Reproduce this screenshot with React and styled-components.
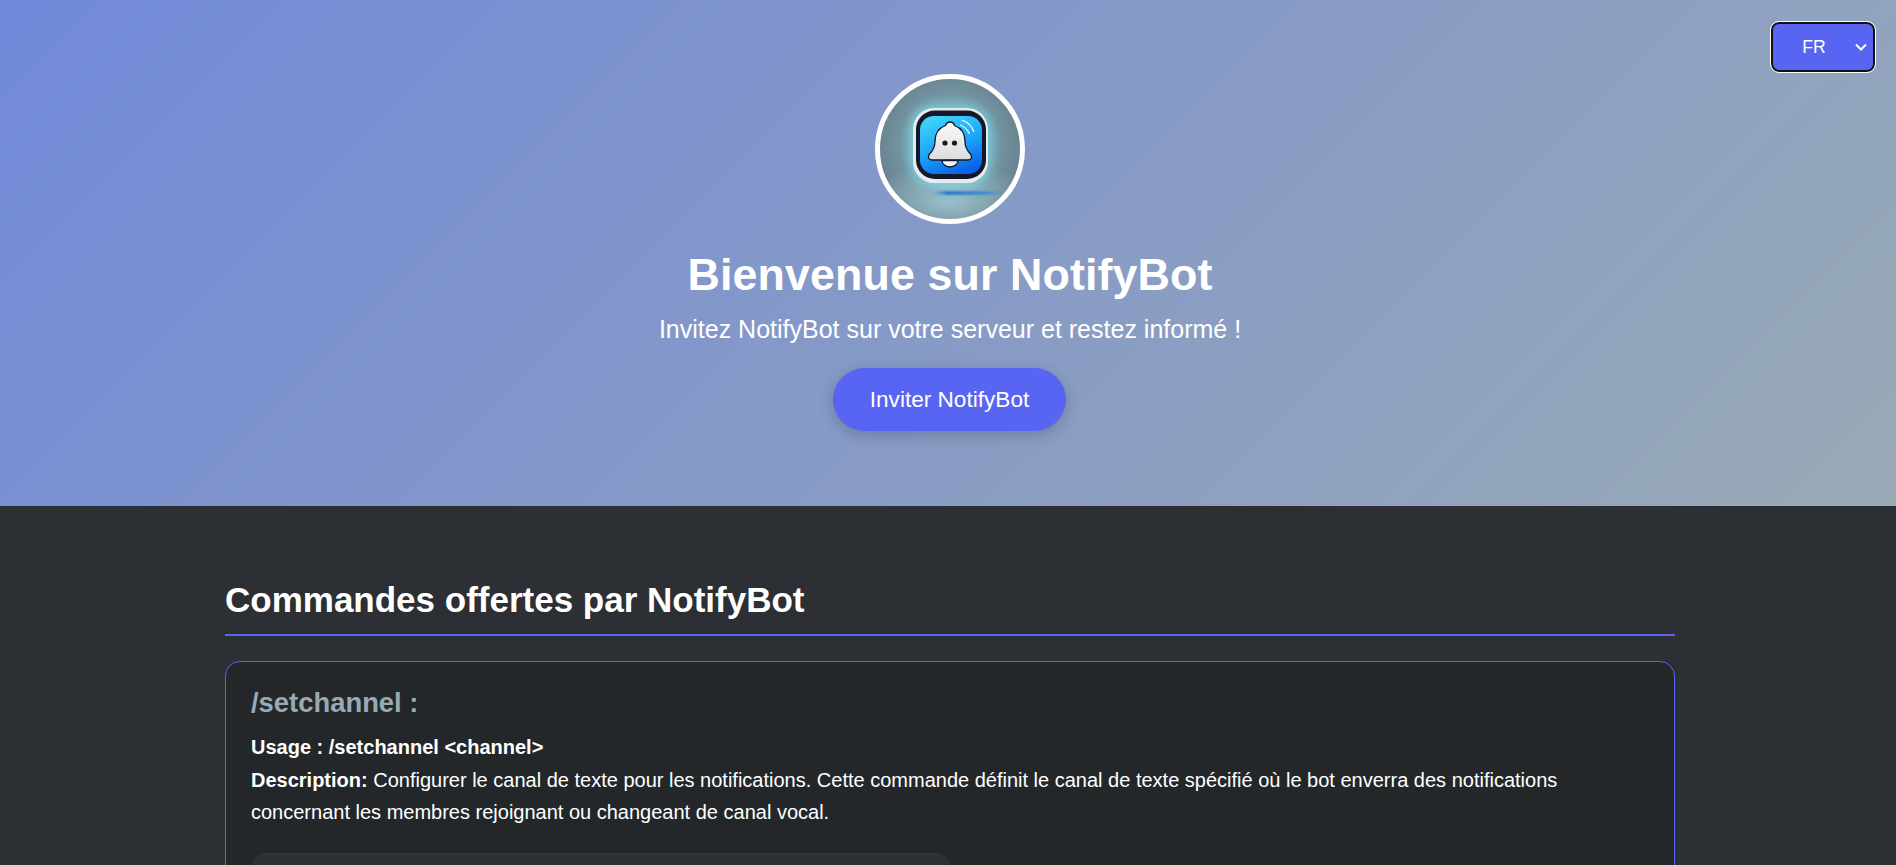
import React from 'react';
import styled, { createGlobalStyle } from 'styled-components';

const GlobalStyle = createGlobalStyle`
  html, body {
    margin: 0;
    padding: 0;
    overflow: hidden;
    height: 865px;
    font-family: "Liberation Sans", Arial, sans-serif;
    background-color: #2c2f33;
    color: white;
  }
`;

const selectArrow = `url("data:image/svg+xml;utf8,<svg xmlns='http://www.w3.org/2000/svg' width='12' height='8' viewBox='0 0 12 8'><path d='M1 1.5l5 5 5-5' fill='none' stroke='white' stroke-width='2'/></svg>")`;

const Hero = styled.header`
  position: relative;
  box-sizing: border-box;
  height: 506px;
  padding: 74px 0 0 4px;
  display: flex;
  flex-direction: column;
  align-items: center;
  background: linear-gradient(135deg, #7289da, #99aab5);
  text-align: center;
`;

const LangSelect = styled.select`
  position: absolute;
  top: 22px;
  right: 21px;
  box-sizing: border-box;
  width: 104px;
  height: 50px;
  padding: 0 18px 0 0;
  appearance: none;
  font-family: "Liberation Sans", Arial, sans-serif;
  font-size: 17.6px;
  color: white;
  background-color: #5865f2;
  background-image: ${selectArrow};
  background-repeat: no-repeat;
  background-position: right 6px center;
  border: 2px solid #111;
  outline: 1px solid white;
  border-radius: 8px;
  text-align: center;
`;

const Avatar = styled.div`
  box-sizing: border-box;
  width: 150px;
  height: 150px;
  border-radius: 50%;
  border: 5px solid white;
  overflow: hidden;
  background:
    radial-gradient(ellipse 65% 28% at 50% 88%, rgba(175, 220, 228, 0.65), transparent),
    radial-gradient(circle at 50% 46%, #8fd3e0 0%, #80b4c2 30%, #71929f 50%, #6a818e 72%, #7c8d98 100%);
  svg {
    display: block;
    width: 100%;
    height: 100%;
  }
`;

const Title = styled.h1`
  margin: 25px 0 0;
  font-size: 44.8px;
  line-height: 51px;
  font-weight: 700;
  letter-spacing: 0.1px;
`;

const Subtitle = styled.p`
  margin: 15px 0 0;
  font-size: 25px;
  line-height: 28px;
`;

const InviteButton = styled.button`
  margin: 25px 1px 0 0;
  width: 233px;
  height: 63px;
  border: none;
  border-radius: 50px;
  background-color: #5865f2;
  color: white;
  font-family: "Liberation Sans", Arial, sans-serif;
  font-size: 22.6px;
  box-shadow: 0 4px 15px rgba(0, 0, 0, 0.2);
`;

const Content = styled.main`
  box-sizing: border-box;
  width: 1450px;
  margin-left: 225px;
  padding-top: 74px;
`;

const SectionTitle = styled.h2`
  margin: 0 0 25px;
  padding-bottom: 14px;
  font-size: 35px;
  line-height: 40px;
  border-bottom: 2px solid #5865f2;
`;

const CommandCard = styled.section`
  box-sizing: border-box;
  padding: 25px;
  background-color: #23272a;
  border: 1px solid #5865f2;
  border-radius: 15px;
`;

const CommandName = styled.h3`
  margin: 0 0 13px;
  font-size: 27.4px;
  line-height: 31px;
  color: #99aab5;
`;

const CommandText = styled.p`
  margin: 0 0 24px;
  font-size: 20px;
  line-height: 32.6px;
`;

const ExampleBox = styled.div`
  box-sizing: border-box;
  width: 699px;
  height: 200px;
  background-color: #2c2f33;
  border: 1px solid #33363b;
  border-radius: 15px;
`;

function BotLogo() {
  return (
    <svg viewBox="0 0 140 140">
      <defs>
        <linearGradient id="tile" x1="0.2" y1="0" x2="0.6" y2="1">
          <stop offset="0" stopColor="#41d6fb" />
          <stop offset="0.55" stopColor="#1ba4f8" />
          <stop offset="1" stopColor="#0b62ea" />
        </linearGradient>
        <linearGradient id="bell" x1="0" y1="0" x2="0" y2="1">
          <stop offset="0" stopColor="#fafafa" />
          <stop offset="1" stopColor="#dcdcdc" />
        </linearGradient>
        <linearGradient id="streak" x1="0" y1="0" x2="1" y2="0">
          <stop offset="0" stopColor="#1976d8" stopOpacity="0" />
          <stop offset="0.2" stopColor="#1668d0" />
          <stop offset="0.7" stopColor="#2a86d8" />
          <stop offset="1" stopColor="#2a86d8" stopOpacity="0" />
        </linearGradient>
        <filter id="soft" x="-30%" y="-30%" width="160%" height="160%"><feGaussianBlur stdDeviation="5" /></filter>
        <filter id="soft2" x="-10%" y="-200%" width="120%" height="500%"><feGaussianBlur stdDeviation="0.8" /></filter>
      </defs>
      <rect x="29" y="26" width="83" height="82" rx="24" fill="#7fe6f5" opacity="0.5" filter="url(#soft)" />
      <rect x="33" y="29" width="75" height="75" rx="21" fill="#e6ebed" />
      <rect x="36" y="31.500" width="70" height="68.500" rx="19" fill="#14182a" />
      <rect x="40" y="37" width="62" height="58" rx="14" fill="url(#tile)" />
      <path d="M70 43c2.500 0 4 1.500 4.500 3.500c7 2.500 10.500 8.500 10.500 16c0 6 2.500 9.500 5.500 12.500c2 2.500 1 6-2.500 6H52c-3.500 0-4.500-3.500-2.500-6c3-3 5.500-6.500 5.500-12.500c0-7.500 3.500-13.500 10.500-16c.5-2 2-3.500 4.500-3.500z" fill="url(#bell)" stroke="#14182a" strokeWidth="1.3" />
      <path d="M62 81.500a8 6.500 0 0 0 16 0z" fill="#f4f4f4" stroke="#14182a" strokeWidth="1.3" />
      <circle cx="65" cy="64" r="2.600" fill="#14182a" />
      <circle cx="74.500" cy="64" r="2.600" fill="#14182a" />
      <path d="M80 46c4.500 1.500 7.500 4.500 9.500 9M82 41c5.500 2 10 6.500 12 12" fill="none" stroke="#eaf8ff" strokeWidth="1.3" />
      <rect x="53" y="112.500" width="72" height="3" rx="1.500" fill="url(#streak)" filter="url(#soft2)" />
    </svg>
  );
}

export default function App() {
  return (
    <>
      <GlobalStyle />
      <Hero>
        <LangSelect defaultValue="fr">
          <option value="fr">FR</option>
          <option value="en">EN</option>
        </LangSelect>
        <Avatar>
          <BotLogo />
        </Avatar>
        <Title>Bienvenue sur NotifyBot</Title>
        <Subtitle>Invitez NotifyBot sur votre serveur et restez informé !</Subtitle>
        <InviteButton>Inviter NotifyBot</InviteButton>
      </Hero>
      <Content>
        <SectionTitle>Commandes offertes par NotifyBot</SectionTitle>
        <CommandCard>
          <CommandName>/setchannel :</CommandName>
          <CommandText>
            <strong>Usage : /setchannel &lt;channel&gt;</strong>
            <br />
            <strong>Description:</strong> Configurer le canal de texte pour les notifications. Cette commande définit le canal de texte spécifié où le bot enverra des notifications concernant les membres rejoignant ou changeant de canal vocal.
          </CommandText>
          <ExampleBox />
        </CommandCard>
      </Content>
    </>
  );
}
